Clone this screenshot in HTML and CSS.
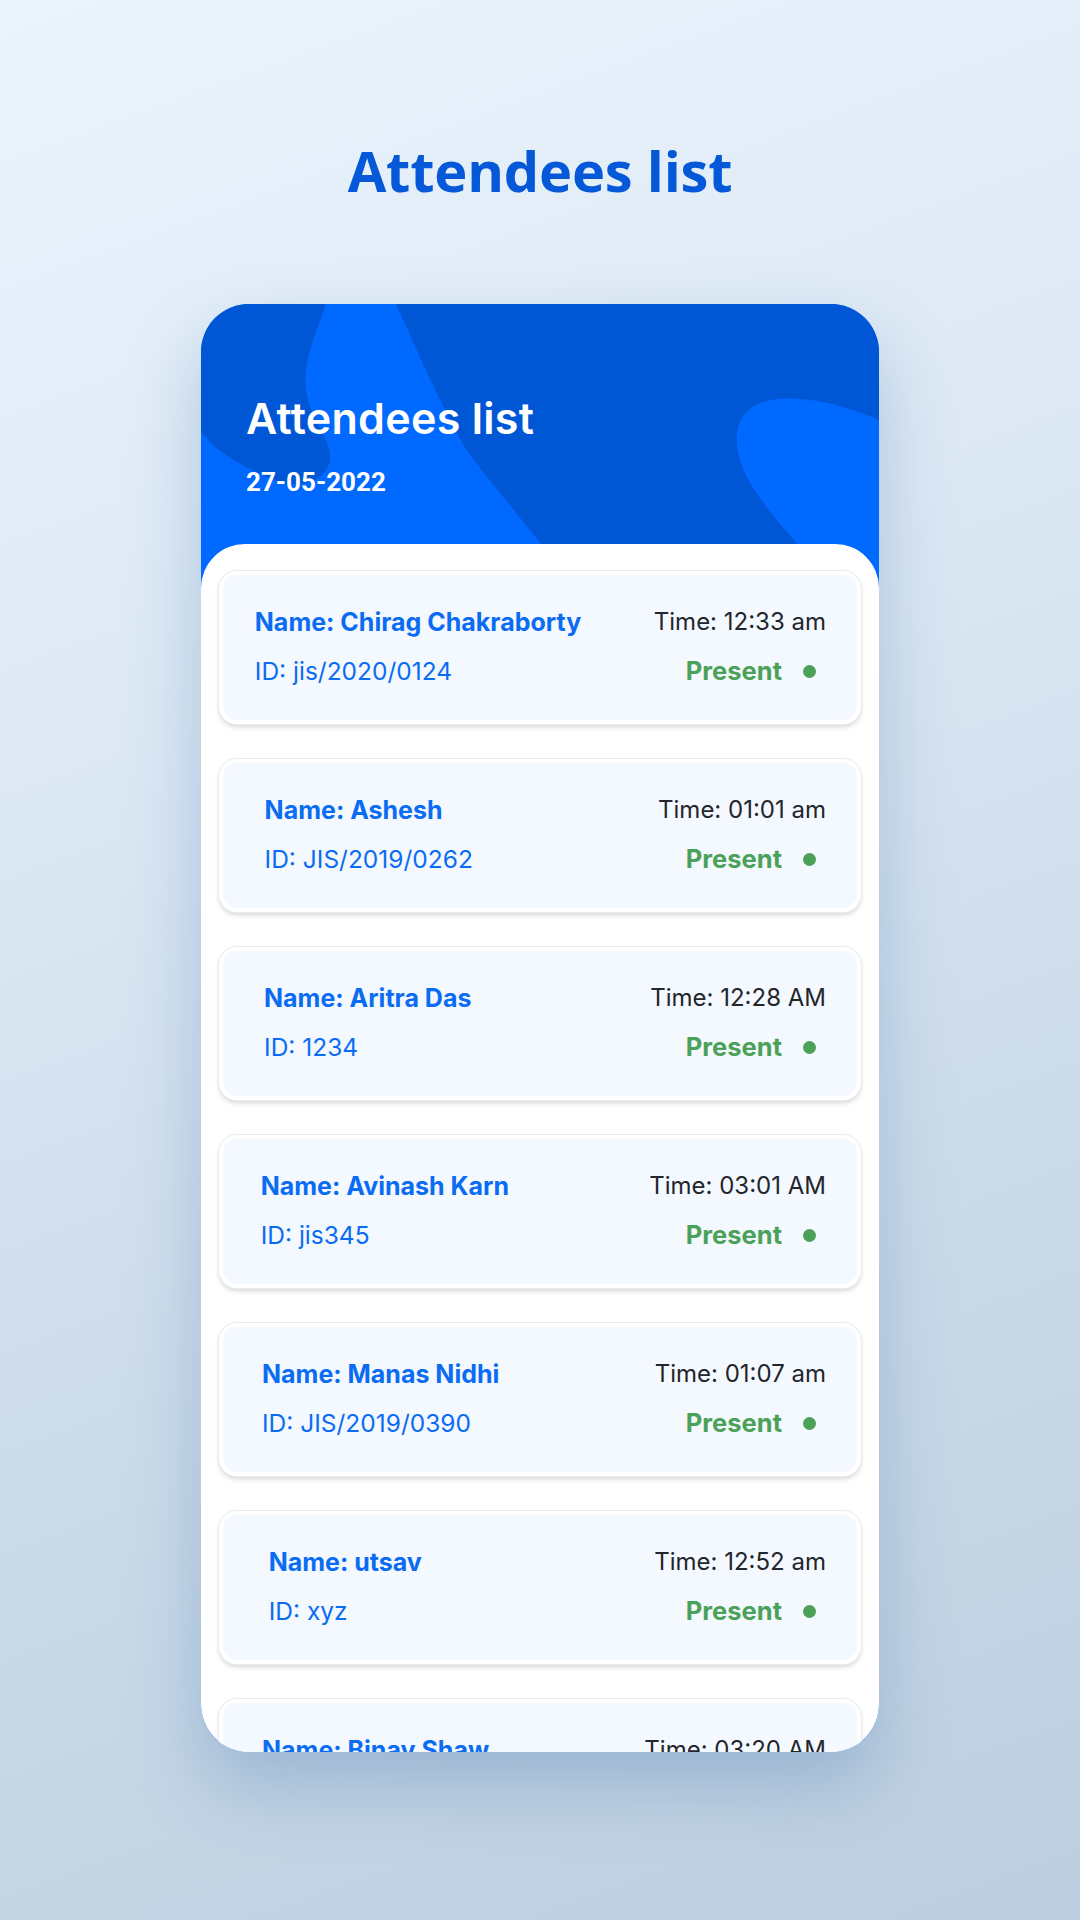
FILE: index.html
```html
<!DOCTYPE html>
<html lang="en">
<head>
<meta charset="utf-8">
<title>Attendees list</title>
<link rel="stylesheet" href="styles.css">
</head>
<body>
<main class="page">
  <h1 class="page-title">Attendees list</h1>
  <section class="phone">
    <svg class="phone-bg" viewBox="0 0 678 330" width="678" height="330" aria-hidden="true">
      <path fill="#0057D5" d="M0,0 L125,0 C112,38 100,62 106,92 C114,124 134,140 128,160 C120,182 92,186 64,172 C38,160 18,150 0,128 Z"/>
      <path fill="#0057D5" d="M195,0 L678,0 L678,116 C640,100 602,91 570,96 C536,102 530,130 540,160 C558,208 622,262 676,330 L402,330 C356,252 300,194 264,144 C238,98 216,46 195,0 Z"/>
    </svg>
    <header class="phone-header">
      <h2 class="phone-title">Attendees list</h2>
      <p class="phone-date">27-05-2022</p>
    </header>
    <div class="panel">
      <article class="card">
        <div class="card-row">
          <div class="col-left">
            <p class="name">Name: Chirag Chakraborty</p>
            <p class="ident">ID: jis/2020/0124</p>
          </div>
          <div class="col-right">
            <p class="time">Time: 12:33 am</p>
            <p class="status">Present <span class="dot"></span></p>
          </div>
        </div>
      </article>
      <article class="card">
        <div class="card-row">
          <div class="col-left">
            <p class="name">Name: Ashesh</p>
            <p class="ident">ID: JIS/2019/0262</p>
          </div>
          <div class="col-right">
            <p class="time">Time: 01:01 am</p>
            <p class="status">Present <span class="dot"></span></p>
          </div>
        </div>
      </article>
      <article class="card">
        <div class="card-row">
          <div class="col-left">
            <p class="name">Name: Aritra Das</p>
            <p class="ident">ID: 1234</p>
          </div>
          <div class="col-right">
            <p class="time">Time: 12:28 AM</p>
            <p class="status">Present <span class="dot"></span></p>
          </div>
        </div>
      </article>
      <article class="card">
        <div class="card-row">
          <div class="col-left">
            <p class="name">Name: Avinash Karn</p>
            <p class="ident">ID: jis345</p>
          </div>
          <div class="col-right">
            <p class="time">Time: 03:01 AM</p>
            <p class="status">Present <span class="dot"></span></p>
          </div>
        </div>
      </article>
      <article class="card">
        <div class="card-row">
          <div class="col-left">
            <p class="name">Name: Manas Nidhi</p>
            <p class="ident">ID: JIS/2019/0390</p>
          </div>
          <div class="col-right">
            <p class="time">Time: 01:07 am</p>
            <p class="status">Present <span class="dot"></span></p>
          </div>
        </div>
      </article>
      <article class="card">
        <div class="card-row">
          <div class="col-left">
            <p class="name">Name: utsav</p>
            <p class="ident">ID: xyz</p>
          </div>
          <div class="col-right">
            <p class="time">Time: 12:52 am</p>
            <p class="status">Present <span class="dot"></span></p>
          </div>
        </div>
      </article>
      <article class="card">
        <div class="card-row">
          <div class="col-left">
            <p class="name">Name: Binay Shaw</p>
            <p class="ident">ID: JIS/2019/0101</p>
          </div>
          <div class="col-right">
            <p class="time">Time: 03:20 AM</p>
            <p class="status">Present <span class="dot"></span></p>
          </div>
        </div>
      </article>
    </div>
  </section>
</main>
</body>
</html>
```

FILE: styles.css
```css
* { box-sizing: border-box; }

html, body {
  margin: 0;
  padding: 0;
}

body {
  width: 1080px;
  height: 1920px;
  overflow: hidden;
  background: linear-gradient(160deg, #EBF4FD 0%, #DCE8F4 35%, #C9D9E8 70%, #BCCEDF 100%);
  font-family: "Inter", "Liberation Sans", sans-serif;
}

.page {
  display: flex;
  flex-direction: column;
  align-items: center;
  padding-top: 131px;
}

.page-title {
  margin: 0;
  font-family: "Open Sans", "Liberation Sans", sans-serif;
  font-weight: 700;
  font-size: 56px;
  line-height: 78px;
  color: #0559D8;
  letter-spacing: -0.2px;
}

.phone {
  position: relative;
  margin-top: 95px;
  width: 678px;
  height: 1448px;
  border-radius: 48px;
  overflow: hidden;
  background: #0069FF;
  box-shadow: 0 34px 70px rgba(90, 135, 185, 0.38);
}

.phone-bg {
  position: absolute;
  top: 0;
  left: 0;
  display: block;
}

.phone-header {
  position: relative;
  height: 240px;
  padding: 88px 0 0 45px;
  color: #fff;
}

.phone-title {
  margin: 0;
  font-family: "Inter", "Liberation Sans", sans-serif;
  font-weight: 600;
  font-size: 43px;
  line-height: 52px;
  letter-spacing: 0.3px;
}

.phone-date {
  margin: 23px 0 0;
  font-family: "Roboto", "Liberation Sans", sans-serif;
  font-weight: 700;
  font-size: 26px;
  line-height: 30px;
}

.panel {
  position: relative;
  background: #fff;
  border-radius: 44px 44px 0 0;
  padding: 27px 18px 40px;
  display: flex;
  flex-direction: column;
  gap: 35px;
  min-height: 1300px;
}

.card {
  flex: none;
  height: 153px;
  border-radius: 18px;
  border: 4px solid #fff;
  background: #F4F8FF;
  box-shadow: 0 0 0 1px #E9ECF0, 0 3px 5px rgba(0, 0, 0, 0.16);
}

.card-row {
  display: flex;
  align-items: stretch;
  height: 100%;
  padding: 33px 31px 0 25.5px;
}

.card-row::before {
  content: "";
  flex: 2 1 0;
  order: 0;
}

.card-row::after {
  content: "";
  flex: 23 1 0;
  order: 2;
}

.col-left {
  order: 1;
  display: flex;
  flex-direction: column;
  gap: 21px;
}

.col-right {
  order: 3;
  display: flex;
  flex-direction: column;
  align-items: flex-end;
  gap: 21px;
}

.name, .ident, .time, .status {
  margin: 0;
  font-size: 24px;
  line-height: 28px;
  white-space: nowrap;
}

.name {
  font-size: 25px;
  font-weight: 700;
  color: #0A6CF2;
}

.ident {
  font-size: 24.5px;
  font-weight: 400;
  color: #0A6CF2;
}

.time {
  font-weight: 400;
  color: #23262B;
}

.status {
  display: flex;
  align-items: center;
  gap: 21px;
  margin-right: 10px;
  font-size: 25.5px;
  font-weight: 700;
  color: #4CA159;
}

.dot {
  width: 13px;
  height: 13px;
  border-radius: 50%;
  background: #4CA159;
}
```
